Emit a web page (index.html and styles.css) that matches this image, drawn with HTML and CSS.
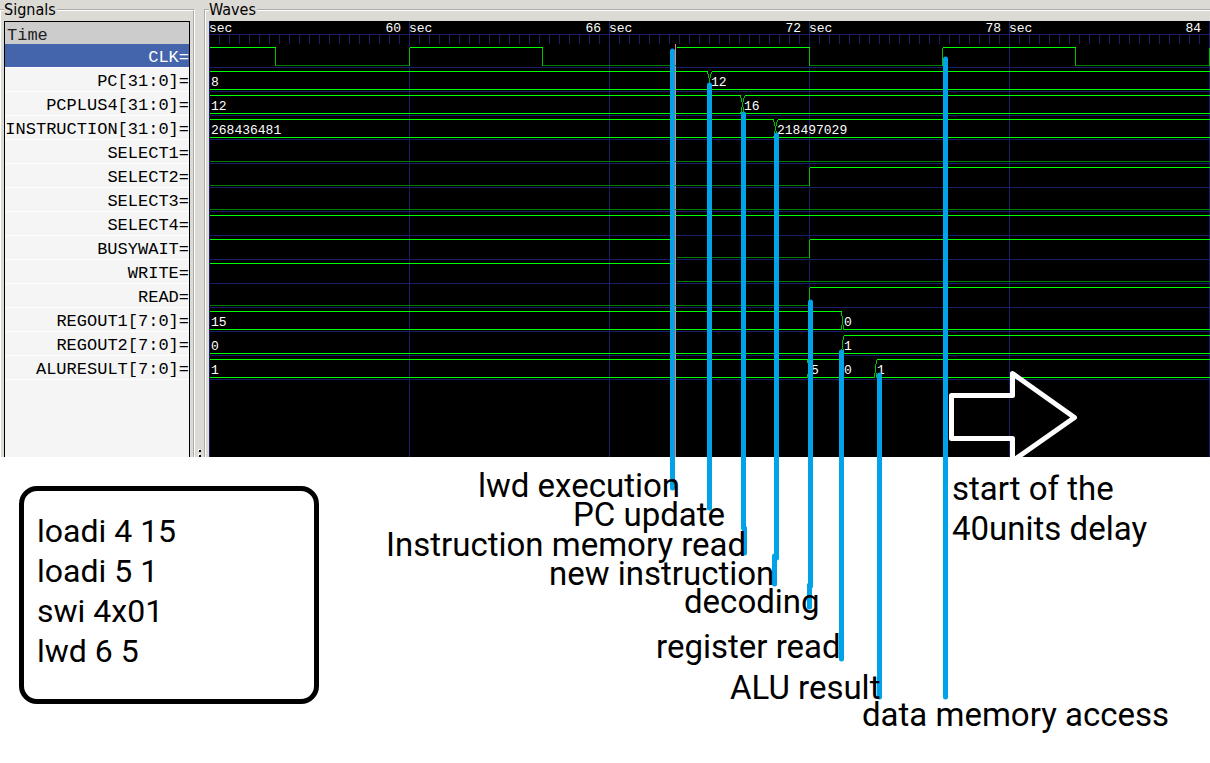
FILE: index.html
```html
<!DOCTYPE html>
<html lang="en">
<head>
<meta charset="utf-8">
<title>Waveform of lwd execution</title>
<link rel="stylesheet" href="styles.css">
</head>
<body>
<main class="board">
  <div class="viewer">
    <fieldset class="pane signals">
      <legend>Signals</legend>
      <div class="signal-box">
        <div class="time">Time</div>
        <ul class="signal-list">
          <li class="selected">CLK=</li>
          <li>PC[31:0]=</li>
          <li>PCPLUS4[31:0]=</li>
          <li>INSTRUCTION[31:0]=</li>
          <li>SELECT1=</li>
          <li>SELECT2=</li>
          <li>SELECT3=</li>
          <li>SELECT4=</li>
          <li>BUSYWAIT=</li>
          <li>WRITE=</li>
          <li>READ=</li>
          <li>REGOUT1[7:0]=</li>
          <li>REGOUT2[7:0]=</li>
          <li>ALURESULT[7:0]=</li>
        </ul>
      </div>
    </fieldset>
    <div class="splitter"><i class="grip"></i><i class="grip"></i></div>
    <fieldset class="pane waves">
      <legend>Waves</legend>
      <svg class="scope" role="img" aria-label="Signal waveforms">
        <defs>
          <pattern id="ticks" width="10" height="9" y="14" patternUnits="userSpaceOnUse"><rect class="grid" width="1" height="9"/></pattern>
          <pattern id="columns" width="200" height="600" patternUnits="userSpaceOnUse"><rect class="grid" width="1" height="600"/></pattern>
          <pattern id="rows" width="200" height="24" y="22" patternUnits="userSpaceOnUse"><rect class="grid" y="0" width="200" height="1"/></pattern>
        </defs>
        <rect class="grid" y="13" width="100%" height="1"/>
        <rect y="14" width="100%" height="9" fill="url(#ticks)"/>
        <rect width="100%" height="100%" fill="url(#columns)"/>
        <rect y="46" width="100%" height="313" fill="url(#rows)"/>
        <rect class="marker" x="466" y="23" width="1" height="100%"/>
        <g class="value">
          <text x="0" y="11">sec</text>
          <text class="stamp" x="192" y="11">60</text><text x="200" y="11">sec</text>
          <text class="stamp" x="392" y="11">66</text><text x="400" y="11">sec</text>
          <text class="stamp" x="592" y="11">72</text><text x="600" y="11">sec</text>
          <text class="stamp" x="792" y="11">78</text><text x="800" y="11">sec</text>
          <text class="stamp" x="992" y="11">84</text>
        </g>
        <g transform="translate(.5 .5)">
          <g>
            <path class="low" d="M66 44H200M333 44H466M600 44H733M866 44H1000"/>
            <path class="edge" d="M66 26V44M200 44V26M333 26V44M600 26V44M733 44V26M866 26V44M1000 44V26"/>
            <path class="high" d="M0 26H66M200 26H333M467 26H600M733 26H866M1000 26H4000"/>
          </g>
          <g transform="translate(0 24)">
            <path class="high" d="M0 26H498M502 26H4000M0 44H498M502 44H4000"/>
            <path class="edge" d="M498 26V28L499 29V32L500 33V37L499 38V42L498 44M502 26V28L501 29V32L500 33V37L501 38V42L502 44"/>
          </g>
          <g transform="translate(0 48)">
            <path class="high" d="M0 26H531M535 26H4000M0 44H531M535 44H4000"/>
            <path class="edge" d="M531 26V28L532 29V32L533 33V37L532 38V42L531 44M535 26V28L534 29V32L533 33V37L534 38V42L535 44"/>
          </g>
          <g transform="translate(0 72)">
            <path class="high" d="M0 26H564M568 26H4000M0 44H564M568 44H4000"/>
            <path class="edge" d="M564 26V28L565 29V32L566 33V37L565 38V42L564 44M568 26V28L567 29V32L566 33V37L567 38V42L568 44"/>
          </g>
          <path class="low" transform="translate(0 96)" d="M0 44H4000"/>
          <g transform="translate(0 120)">
            <path class="low" d="M0 44H600"/><path class="edge" d="M600 44V26"/><path class="high" d="M600 26H4000"/>
          </g>
          <path class="low" transform="translate(0 144)" d="M0 44H4000"/>
          <path class="high" transform="translate(0 168)" d="M0 26H4000"/>
          <g transform="translate(0 192)">
            <path class="low" d="M467 44H600"/><path class="edge" d="M600 44V26"/><path class="high" d="M0 26H466M600 26H4000"/>
          </g>
          <g transform="translate(0 216)">
            <path class="low" d="M467 44H4000"/><path class="high" d="M0 26H466"/>
          </g>
          <g transform="translate(0 240)">
            <path class="low" d="M0 44H600"/><path class="edge" d="M600 44V26"/><path class="high" d="M600 26H4000"/>
          </g>
          <g transform="translate(0 264)">
            <path class="high" d="M0 26H632M0 44H632M634 44H4000"/>
            <path class="edge" d="M632 26V30L633 31V39L632 40V44M633 39L634 40V44"/>
          </g>
          <g transform="translate(0 288)">
            <path class="high" d="M0 44H632M634 44H4000M634 26H4000"/>
            <path class="edge" d="M634 26V30L633 31V39L632 40V44M633 39L634 40V44"/>
          </g>
          <g transform="translate(0 312)">
            <path class="high" d="M0 26H598M602 26H632M0 44H598M602 44H632M634 44H665M667 44H4000M667 26H4000"/>
            <path class="edge" d="M598 26V28L602 42V44M602 26V28L598 42V44M632 26V30L633 31V39L634 40V44M667 26V30L666 31V39L665 40V44M666 39L667 40V44"/>
          </g>
        </g>
        <g class="value">
          <text x="2" y="65">8</text><text x="502" y="65">12</text>
          <text x="2" y="89">12</text><text x="535" y="89">16</text>
          <text x="2" y="113">268436481</text><text x="568" y="113">218497029</text>
          <text x="2" y="305">15</text><text x="635" y="305">0</text>
          <text x="2" y="329">0</text><text x="635" y="329">1</text>
          <text x="2" y="353">1</text><text x="602" y="353">5</text><text x="635" y="353">0</text><text x="668" y="353">1</text>
        </g>
      </svg>
    </fieldset>
  </div>

  <section class="notes">
    <div class="program">
      <p>loadi 4 15</p>
      <p>loadi 5 1</p>
      <p>swi 4x01</p>
      <p>lwd 6 5</p>
    </div>
  </section>

  <svg class="ink" aria-hidden="true">
    <path class="pen" d="M672.5 51V488M709.5 85V508M743.5 114V528M744.5 528V553M776.5 135V558M774.5 556V584M810.5 302V586M809.5 585V607M841.5 352V659M879.5 375V697M945.5 59V697"/>
    <path class="arrow" d="M951.5 395.5H1012.5V373.5L1074.5 417.5L1012.5 461V438.5H951.5Z"/>
  </svg>
  <span class="label lwd">lwd execution</span>
  <span class="label pc">PC update</span>
  <span class="label imem">Instruction memory read</span>
  <span class="label instr">new instruction</span>
  <span class="label decode">decoding</span>
  <span class="label reg">register read</span>
  <span class="label alu">ALU result</span>
  <span class="label dmem">data memory access</span>
  <span class="label delay">start of the<br>40units delay</span>
</main>
</body>
</html>
```

FILE: styles.css
```css
* { box-sizing: border-box; }

body {
  margin: 0;
  background: #fff;
  color: #000;
}

.board {
  position: relative;
  min-height: 100vh;
  overflow: hidden;
}

.viewer {
  display: flex;
  height: 457px;
  overflow: hidden;
  background: #dcdad5;
}

.pane {
  display: flex;
  flex-direction: column;
  min-width: 0;
  margin: 0;
  padding: 2px 3px 0;
  border: 2px groove #fff;
  border-bottom: 0;
}

.pane legend {
  padding: 0 1px 0 0;
  font: 16px/19px "DejaVu Sans Condensed", "DejaVu Sans", sans-serif;
}

.signals {
  flex: 0 0 195px;
  border-left: 1px solid #fff;
}

.signal-box {
  height: 436px;
  border: 1px solid #000;
  border-bottom: 0;
  background: #f5f5f5;
  font: 17px/24px "Liberation Mono", monospace;
}

.time {
  height: 22px;
  padding: 2px 2px 0;
  background: #ccc;
  color: #222;
}

.signal-list {
  margin: 0;
  padding: 0;
  list-style: none;
  text-align: right;
}

.signal-list li {
  height: 24px;
  padding-top: 2px;
  border-bottom: 1px solid #fff;
  white-space: nowrap;
}

.signal-list .selected {
  background: #4464ac;
  color: #fff;
}

.splitter {
  flex: 0 0 9px;
  display: flex;
  flex-direction: column;
  align-items: center;
  justify-content: flex-end;
  gap: 3px;
}

.grip {
  width: 2px;
  height: 2px;
  background: #000;
  box-shadow: -1px -1px #fff;
}

.waves {
  flex: 1;
  padding-right: 0;
  border-right: 0;
}

.scope {
  display: block;
  width: 100%;
  height: 436px;
  background: #000;
  shape-rendering: crispEdges;
}

.grid { fill: #1c1c6c; }
.marker { fill: #f08078; }

.high, .low, .edge { fill: none; stroke-width: 1; }
.high { stroke: #00ff00; }
.low { stroke: #008000; }
.edge { stroke: #00c000; }

.value {
  fill: #fff;
  font: 13px "Liberation Mono", monospace;
}

.stamp { text-anchor: end; }

.notes { padding: 29px 19px; }

.program {
  width: 300px;
  padding: 20px 13px 28px;
  border: 5px solid #000;
  border-radius: 18px;
  font: 32px/40px Roboto, sans-serif;
}

.program p { margin: 0; }

.ink {
  position: absolute;
  inset: 0;
  width: 100%;
  height: 100%;
  pointer-events: none;
}

.pen {
  fill: none;
  stroke: #00a2e8;
  stroke-width: 5;
  stroke-linecap: round;
}

.arrow {
  fill: none;
  stroke: #fff;
  stroke-width: 5;
  stroke-linejoin: round;
}

.label {
  position: absolute;
  font: 33px/28px Roboto, sans-serif;
  white-space: nowrap;
}

.lwd { left: 478px; top: 472px; }
.pc { left: 573px; top: 501px; }
.imem { left: 386px; top: 531px; }
.instr { left: 549px; top: 560px; }
.decode { left: 684px; top: 588px; }
.reg { left: 656px; top: 633px; }
.alu { left: 730px; top: 674px; }
.dmem { left: 862px; top: 701px; }
.delay { left: 952px; top: 469px; line-height: 40px; }
```
